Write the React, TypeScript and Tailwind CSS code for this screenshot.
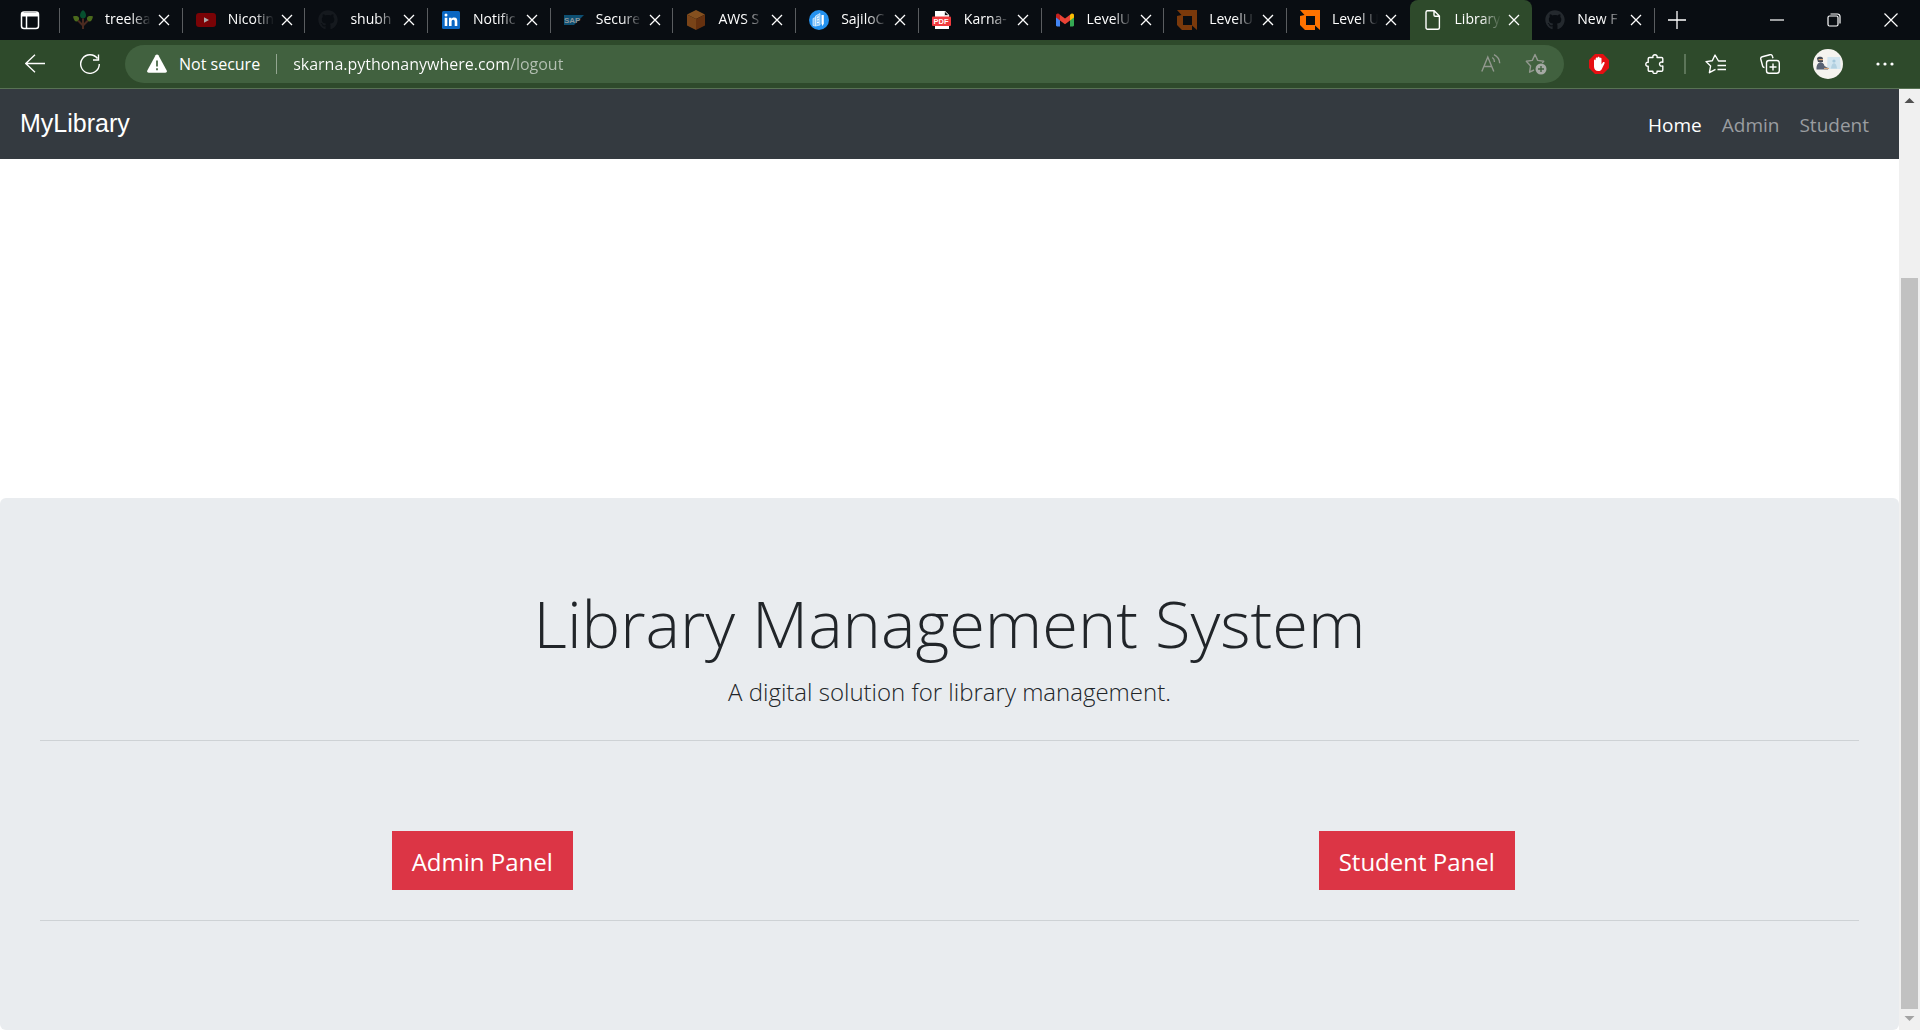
import React from "react";
import { FaGithub } from "react-icons/fa";

const TreeIcon = () => (
  <svg viewBox="0 0 20 20" className="size-5">
    <path d="M10 0c2 1.500 3 3.500 3 5.500S11.500 8.500 10 8.500 7 7.500 7 5.500 8 1.500 10 0z" fill="#06502f" />
    <path d="M0 6.500c3-1 5.500-.5 6 1.500.5 2-1 3.500-2.500 3.500S.5 9.500 0 6.500z" fill="#4b6a1c" />
    <path d="M20 6.500c-3-1-5.500-.5-6 1.500-.5 2 1 3.500 2.500 3.500s3-2 3.500-5z" fill="#4b6a1c" />
    <path d="M10 8.500V19M5 10.500l4.500 4.500M15 10.500L10.500 15" stroke="#4a2a20" strokeWidth="2" fill="none" />
  </svg>
);
const YoutubeIcon = () => (
  <svg viewBox="0 0 20 20" className="size-5">
    <rect x="0" y="3" width="20" height="14" rx="3" fill="#7a0306" />
    <path d="M8 7.200l5 2.800-5 2.800z" fill="#a9a9a9" />
  </svg>
);
const GithubIcon = () => <FaGithub className="size-5 text-[#24292e]" />;
const GithubDim = () => <FaGithub className="size-5 text-[#15191e]" />;
const LinkedinIcon = () => (
  <svg viewBox="0 0 20 20" className="size-5">
    <rect x="1" y="1" width="18" height="18" rx="1.500" fill="#0a66c2" />
    <path d="M3.700 7.700h2.600V16H3.700zM8 7.700h2.500v1.200c.5-.9 1.500-1.400 2.700-1.400 2.500 0 3.100 1.600 3.100 3.900V16h-2.600v-4.200c0-1.100-.2-2.100-1.400-2.100s-1.700.9-1.700 2.100V16H8z" fill="#fff" />
    <circle cx="5" cy="5" r="1.500" fill="#fff" />
  </svg>
);
const SapIcon = () => (
  <svg viewBox="0 0 20 20" className="size-5">
    <path d="M0 5h20L10 15H0z" fill="#0d4f72" />
    <text x="0" y="13" fontSize="8" fontWeight="700" fontFamily="Liberation Sans, sans-serif" fill="#8b9499">SAP</text>
  </svg>
);
const BoxIcon = () => (
  <svg viewBox="0 0 20 20" className="size-5">
    <path d="M10 0l9 4.500L10 9 1 4.500z" fill="#85501f" />
    <path d="M1 4.500L10 9v11l-9-4.500z" fill="#7a4418" />
    <path d="M19 4.500L10 9v11l9-4.500z" fill="#66310f" />
  </svg>
);
const SajiloIcon = () => (
  <svg viewBox="0 0 20 20" className="size-5">
    <circle cx="10" cy="10" r="10" fill="#2492f0" />
    <path d="M6.500 6L11 3.500v11.500l-4.500 1zM4 8.500l2.500-1v8.500L4 15.500z" fill="#8cc8fa" stroke="#d6ebfd" strokeWidth=".8" />
    <path d="M8 7.500l2-.7M8 10l2-.4M8 12.500l2-.2" stroke="#fff" strokeWidth="1" />
    <path d="M12.500 5h2.300v8.500L13.600 16l-1.100-2.500z" fill="#fff" />
  </svg>
);
const PdfIcon = () => (
  <svg viewBox="0 0 20 20" className="size-5">
    <path d="M3 1h10l4 4v14H3z" fill="#fff" />
    <path d="M12.500 1v4.500H17z" fill="#111" stroke="#fff" strokeWidth=".7" />
    <rect x="0" y="6.500" width="19" height="9.500" rx="1" fill="#f03a3e" />
    <text x="1.500" y="14" fontSize="7.500" fontWeight="700" fontFamily="Liberation Sans, sans-serif" fill="#fff">PDF</text>
  </svg>
);
const GmailIcon = () => (
  <svg viewBox="0 0 20 20" className="size-5">
    <path d="M1 6l4 3v7.500H2.200C1.500 16.500 1 16 1 15.300z" fill="#4285f4" />
    <path d="M19 6l-4 3v7.500h2.800c.7 0 1.200-.5 1.200-1.200z" fill="#34a853" />
    <path d="M15 4.800l1-.8c1.300-1 3-.2 3 1.400V7.500L15 10.500z" fill="#fbbc04" />
    <path d="M5 4.800L4 4C2.700 3 1 3.800 1 5.400v2.100l4 3z" fill="#c5221f" />
    <path d="M5 4.800l5 3.800 5-3.800v5.700l-5 3.800-5-3.800z" fill="#ea4335" />
  </svg>
);
const ringPath = "M0 0h20v20l-5-4.500V20H5l-5-5V6l4.500-1zM6 6v9h9V6z";
const LevelDim = () => (
  <svg viewBox="0 0 20 20" className="size-5"><path fillRule="evenodd" d={ringPath} fill="#7a390b" /></svg>
);
const LevelBright = () => (
  <svg viewBox="0 0 20 20" className="size-5"><path fillRule="evenodd" d={ringPath} fill="#ff7200" /></svg>
);
const PageIcon = () => (
  <svg viewBox="0 0 20 20" className="size-5" fill="none" stroke="#fff" strokeWidth="1.400" strokeLinejoin="round">
    <path d="M4.500.8h6.700l5.200 5.200v11.700c0 .8-.7 1.500-1.500 1.500H4.500c-.8 0-1.500-.7-1.500-1.500V2.300C3 1.500 3.700.8 4.500.8zM11 1v4c0 .7.500 1.200 1.200 1.200h4" />
  </svg>
);

type TabInfo = { title: string; Icon: React.FC; active?: boolean; beforeActive?: boolean };
const tabs: TabInfo[] = [
  { title: "treelea", Icon: TreeIcon },
  { title: "Nicotin", Icon: YoutubeIcon },
  { title: "shubh", Icon: GithubDim },
  { title: "Notific", Icon: LinkedinIcon },
  { title: "Secure", Icon: SapIcon },
  { title: "AWS S", Icon: BoxIcon },
  { title: "SajiloC", Icon: SajiloIcon },
  { title: "Karna-", Icon: PdfIcon },
  { title: "LevelU", Icon: GmailIcon },
  { title: "LevelU", Icon: LevelDim },
  { title: "Level U", Icon: LevelBright, beforeActive: true },
  { title: "Library", Icon: PageIcon, active: true },
  { title: "New F", Icon: GithubIcon },
];

const Cross = () => (
  <svg viewBox="0 0 12 12" className="size-3" stroke="#fff" strokeWidth="1.300"><path d="M1 1l10 10M11 1L1 11" /></svg>
);

function Tab({ title, Icon, active, beforeActive }: TabInfo) {
  return (
    <div className={active ? "relative flex h-10 min-w-0 flex-1 items-center rounded-t-lg bg-[#2e4a2b] pl-[13px]" : "relative flex h-10 min-w-0 flex-1 items-center pl-[13px]"}>
      <span className="shrink-0"><Icon /></span>
      <span className="mb-0.5 ml-3 w-12 shrink-0 text-[14px] leading-5 whitespace-nowrap text-white [mask-image:linear-gradient(to_right,#000_26px,transparent_46px)]">
        {title}
      </span>
      <button aria-label={"Close " + title} className="ml-[5px] shrink-0"><Cross /></button>
      {!active && !beforeActive && <span className="absolute top-2 right-0 h-[25px] w-px bg-[#5a5d60]" />}
    </div>
  );
}

function TabStrip() {
  return (
    <div className="flex h-10 items-center bg-[#090d12]">
      <button aria-label="Tab actions" className="flex h-10 w-[59px] shrink-0 items-center justify-center">
        <svg viewBox="0 0 20 20" className="size-5" fill="none" stroke="#fff" strokeWidth="1.500">
          <rect x="1.500" y="2" width="17" height="16.500" rx="2.500" />
          <path d="M2 3h16v3.500H2z" fill="#fff" stroke="none" />
          <path d="M6.500 6v12" />
        </svg>
      </button>
      <span className="h-[25px] w-px shrink-0 bg-[#5a5d60]" />
      <div className="flex min-w-0 flex-1">
        {tabs.map((t, i) => <Tab key={i} {...t} />)}
      </div>
      <button aria-label="New tab" className="flex h-10 w-11 shrink-0 items-center justify-center">
        <svg viewBox="0 0 18 18" className="size-[18px]" stroke="#fff" strokeWidth="1.300"><path d="M9 0v18M0 9h18" /></svg>
      </button>
      <div className="flex w-[221px] shrink-0 items-center justify-end">
        <button aria-label="Minimize" className="flex h-10 w-[57px] items-center justify-center">
          <svg viewBox="0 0 14 14" className="size-[14px]" stroke="#fff" strokeWidth="1.200"><path d="M0 7h14" /></svg>
        </button>
        <button aria-label="Restore" className="flex h-10 w-[57px] items-center justify-center">
          <svg viewBox="0 0 14 14" className="size-[14px]" fill="none" stroke="#fff" strokeWidth="1.200">
            <rect x="1" y="3" width="10" height="10" rx="1.500" /><path d="M3.500 1h7a2.500 2.500 0 0 1 2.500 2.500v7" />
          </svg>
        </button>
        <button aria-label="Close window" className="flex h-10 w-[58px] items-center justify-center">
          <svg viewBox="0 0 14 14" className="size-[14px]" stroke="#fff" strokeWidth="1.200"><path d="M.5.5l13 13M13.500.5l-13 13" /></svg>
        </button>
      </div>
    </div>
  );
}

function Toolbar() {
  return (
    <div className="flex h-[49px] items-center border-b border-[#587254] bg-[#2e4a2b] text-white">
      <button aria-label="Back" className="ml-[25px] shrink-0">
        <svg viewBox="0 0 20 20" className="size-5" fill="none" stroke="#fff" strokeWidth="1.300"><path d="M20 9.500H.8M10 .8L.8 9.500 10 18.200" /></svg>
      </button>
      <button aria-label="Refresh" className="ml-[35px] shrink-0">
        <svg viewBox="0 0 20 20" className="size-5" fill="none" stroke="#fff" strokeWidth="1.400"><path d="M19.300 10A9.300 9.300 0 1 1 17.500 4.500M18.500.5v5.500H13" /></svg>
      </button>
      <div className="ml-[25px] flex h-[38px] min-w-0 flex-1 items-center rounded-full bg-[#41613f] pr-[17px] pl-[22px]">
        <svg viewBox="0 0 20 20" className="size-5 shrink-0">
          <path d="M8.600 1.300a1.600 1.600 0 0 1 2.800 0l8.300 15.200c.6 1.100-.1 2.200-1.400 2.200H1.700C.4 18.700-.3 17.600.3 16.500z" fill="#fff" />
          <path d="M10 6.500v6M10 14.300v2" stroke="#41613f" strokeWidth="1.700" />
        </svg>
        <label htmlFor="address" className="ml-3 shrink-0 text-[16px] leading-6">Not secure</label>
        <span className="ml-4 h-5 w-px shrink-0 bg-[#93a691]" />
        <input
          id="address"
          defaultValue="skarna.pythonanywhere.com/logout"
          className="ml-4 min-w-0 flex-1 bg-[linear-gradient(to_right,#ffffff_217px,#b5c1b4_217px)] bg-clip-text text-[16px] leading-6 text-transparent outline-none"
        />
        <button aria-label="Read aloud" className="shrink-0">
          <svg viewBox="0 0 20 20" className="size-5" fill="none" stroke="#92988f" strokeWidth="1.400">
            <path d="M.8 17.500L6.800 3l6 14.500M3 12.500h7.500M11.300 3.500c1.500 1 2.200 2.500 2.200 4.500M13 .7c3.500 1.800 5.500 4.800 5.700 8.500" />
          </svg>
        </button>
        <button aria-label="Add to favorites" className="ml-6 shrink-0">
          <svg viewBox="0 0 22 22" className="size-[22px]" fill="none" stroke="#92988f" strokeWidth="1.400">
            <path d="M9 17l-4.400 2.200 1-6.300L1.300 8.300l6-.9L10 1.500l2.700 5.900 6 .9-1.500 1.700" strokeLinejoin="round" />
            <circle cx="16" cy="16" r="5.500" fill="#a5a9a4" stroke="none" />
            <path d="M16 13v6M13 16h6" stroke="#41613f" />
          </svg>
        </button>
      </div>
      <button aria-label="Ad blocker" className="ml-[25px] shrink-0">
        <svg viewBox="0 0 20 20" className="size-5">
          <path d="M6 0h8l6 6v8l-6 6H6l-6-6V6z" fill="#e60f12" />
          <path d="M5 10V6.500c0-1.200 1.700-1.200 1.700 0V4.500c0-1.200 1.900-1.200 1.900 0V3.600c0-1.200 2-1.200 2 0v1c0-1.200 1.900-1.200 1.900 0V10.500l1.300-1.900c.8-1 2.300-.4 1.700.8l-2.700 5.500c-.7 1.400-1.500 2.200-3.600 2.200C6.500 17.100 5 15 5 12.500z" fill="#fff" />
        </svg>
      </button>
      <button aria-label="Extensions" className="ml-9 shrink-0">
        <svg viewBox="0 0 20 20" className="size-5" fill="none" stroke="#fff" strokeWidth="1.400" strokeLinejoin="round">
          <path d="M4.500 3.500H8C7.500 1.800 8.500.8 10 .8s2.500 1 2 2.700h4.500c.8 0 1.300.5 1.300 1.300v3.400c-2-.5-3.300.4-3.300 1.900s1.300 2.400 3.300 1.900v4c0 .8-.5 1.300-1.300 1.300H12c.5 1.500-.6 2.200-2 2.200s-2.500-.7-2-2.200H4.500c-.8 0-1.300-.5-1.300-1.300V12.200C1.500 12.500.8 11.500.8 10.200S1.500 8 3.200 8.300V4.800c0-.8.5-1.300 1.300-1.300z" />
        </svg>
      </button>
      <span className="ml-[19px] h-5 w-[2px] shrink-0 bg-[#5c7559]" />
      <button aria-label="Favorites" className="ml-[19px] shrink-0">
        <svg viewBox="0 0 22 20" className="h-5 w-[22px]" fill="none" stroke="#fff" strokeWidth="1.400" strokeLinejoin="round">
          <path d="M21 7h-7.500L10 1 7.300 6.700 1 7.600l4.600 4.400-1.200 6.700 6.100-3.300M12.500 11.500H21M12.500 15.500H21" />
        </svg>
      </button>
      <button aria-label="Collections" className="ml-[33px] shrink-0">
        <svg viewBox="0 0 20 20" className="size-5" fill="none" stroke="#fff" strokeWidth="1.400">
          <rect x="6.500" y="6.500" width="12.800" height="12.800" rx="2.500" /><path d="M13 9.500v7M9.500 13h7M4.500 13.500c-1 0-1.600-.6-1.800-1.300L.8 5.200C.5 4 1.200 3 2.300 2.700l7.500-2c1.200-.3 2.300.3 2.600 1.500l.6 2" />
        </svg>
      </button>
      <button aria-label="Profile" className="ml-[33px] shrink-0">
        <svg viewBox="0 0 30 30" className="size-[30px]">
          <circle cx="15" cy="15" r="15" fill="#f5f3ef" />
          <path d="M14.500 8h12.500l.7 12H14z" fill="#d2e5ef" />
          <circle cx="21" cy="12" r="1.600" fill="#a5c8dc" /><path d="M18 19.500c.5-7 5.500-7 6 0z" fill="#b3d1e1" />
          <path d="M4 9.500c0-2.300 6-2.300 6 0v3.500H5z" fill="#454b57" /><path d="M5.500 10h4.500v1.200H5.500z" fill="#d9a775" />
          <path d="M3.500 20.500c-.5-8 6.500-9.500 8-3.500l3.500 2v1.500z" fill="#596273" /><path d="M11 19.500h5" stroke="#d3a57c" strokeWidth="1.200" />
        </svg>
      </button>
      <button aria-label="Settings and more" className="mr-[26px] ml-[33px] shrink-0">
        <svg viewBox="0 0 18 18" className="size-[18px]" fill="#fff"><circle cx="2" cy="9" r="1.600" /><circle cx="9" cy="9" r="1.600" /><circle cx="16" cy="9" r="1.600" /></svg>
      </button>
    </div>
  );
}

function Scrollbar() {
  return (
    <div className="flex w-[21px] shrink-0 flex-col items-center bg-[#f0f0f0]">
      <svg viewBox="0 0 21 21" className="size-[21px] shrink-0"><path d="M5.500 14L10.500 9l5 5z" fill="#505050" /></svg>
      <div className="flex-[168]" />
      <div className="w-[17px] flex-[732] bg-[#c1c1c1]" />
      <svg viewBox="0 0 21 21" className="size-[21px] shrink-0"><path d="M5.500 7l5 5 5-5z" fill="#a3a3a3" /></svg>
    </div>
  );
}

export default function App() {
  return (
    <div className="flex min-h-screen flex-col bg-white font-['Open_Sans','Noto_Sans',sans-serif]">
      <TabStrip />
      <Toolbar />
      <div className="flex flex-1">
        <main className="flex min-w-0 flex-1 flex-col">
          <nav className="flex h-[70px] items-center justify-between bg-[#343a40] pr-[30px] pb-0.5 pl-5">
            <a href="#home" className="font-['Liberation_Sans',sans-serif] text-[25px] leading-9 text-white">MyLibrary</a>
            <div className="flex gap-5 pt-1 text-[19px] leading-8 text-[#9a9da0]">
              <a href="#home" className="text-white">Home</a>
              <a href="#admin">Admin</a>
              <a href="#student">Student</a>
            </div>
          </nav>
          <div className="min-h-40 flex-1" />
          <section className="rounded-md bg-[#e9ecef] px-10 pt-[83px] pb-[109px] text-[#212529]">
            <h1 className="text-center text-[65px] leading-[84px] font-light">Library Management System</h1>
            <p className="mt-2 text-center text-[24px] leading-[38px] font-light">A digital solution for library management.</p>
            <hr className="mt-[29px] border-[#ced2d5]" />
            <div className="-mx-[25px] grid grid-cols-2 justify-items-center pt-[90px] pb-[30px]">
              <button className="h-[59px] bg-[#dc3545] px-5 pt-0.5 text-[24px] leading-9 text-white">Admin Panel</button>
              <button className="h-[59px] bg-[#dc3545] px-5 pt-0.5 text-[24px] leading-9 text-white">Student Panel</button>
            </div>
            <hr className="border-[#ced2d5]" />
          </section>
        </main>
        <Scrollbar />
      </div>
    </div>
  );
}
